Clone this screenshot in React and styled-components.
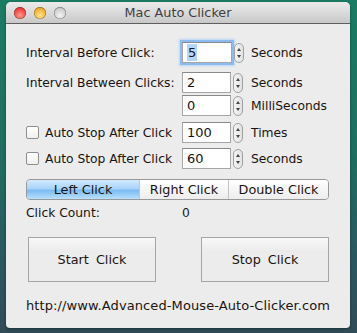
import React from 'react'
import styled, { createGlobalStyle } from 'styled-components'

const GlobalStyle = createGlobalStyle`
  html, body {
    margin: 0;
    padding: 0;
  }
  body {
    width: 357px;
    height: 333px;
    overflow: hidden;
    background: linear-gradient(to bottom, #1b7c64 0%, #1f6f60 45%, #2c5660 80%, #314c58 100%);
    font-family: "DejaVu Sans", "Liberation Sans", sans-serif;
  }
`

const Desktop = styled.div`
  padding: 2px 7px 0 6px;
`

const Window = styled.div`
  width: 344px;
  height: 326px;
  background: #ececec;
  border-radius: 5px 5px 4px 4px;
  overflow: hidden;
  box-shadow: 0 1px 3px rgba(0, 0, 0, 0.4);
  display: flex;
  flex-direction: column;
`

const TitleBar = styled.div`
  height: 21px;
  flex: none;
  display: flex;
  align-items: center;
  position: relative;
  background: linear-gradient(to bottom, #ebebeb 0%, #dadada 50%, #c8c8c8 100%);
  border-bottom: 1px solid #5e5e5e;
  padding-left: 8px;
  gap: 8px;
`

const Light = styled.span`
  width: 12px;
  height: 12px;
  border-radius: 50%;
  background: radial-gradient(circle at 50% 70%, ${(p) => p.$light} 0%, ${(p) => p.$color} 60%, ${(p) => p.$dark} 100%);
  box-shadow: inset 0 0 0 0.5px rgba(0, 0, 0, 0.45);
`

const Title = styled.div`
  position: absolute;
  left: 0;
  right: 0;
  text-align: center;
  font-size: 12.8px;
  color: #3f3f3f;
`

const Content = styled.div`
  padding: 18px 20px 0 20px;
  font-size: 12.3px;
  color: #1a1410;
  display: flex;
  flex-direction: column;
`

const Row = styled.div`
  display: grid;
  grid-template-columns: 156px 62px auto;
  align-items: center;
  height: 21px;
  margin-top: ${(p) => p.$gap || 0}px;
`

const LabelCell = styled.div`
  display: flex;
  align-items: center;
  gap: 6px;
  white-space: nowrap;
`

const Check = styled.span`
  width: 11px;
  height: 11px;
  border: 1px solid #8e8e8e;
  border-radius: 2px;
  background: linear-gradient(to bottom, #ffffff, #f0f0f0);
`

const FieldCell = styled.div`
  display: flex;
  align-items: center;
  gap: 2px;
`

const Field = styled.div`
  width: ${(p) => p.$w || 49}px;
  height: 21px;
  box-sizing: border-box;
  border: 1px solid #a6a6a6;
  border-top-color: #8a8a8a;
  background: #fff;
  padding: 0 4px;
  display: flex;
  align-items: center;
  font-size: 13px;
  box-shadow: ${(p) => (p.$focus ? '0 0 0 2px #8cbcef, 0 0 2px 3px #b7d5f5' : 'none')};
`

const Selected = styled.span`
  background: #b5d5fd;
  padding: 0 1px;
  line-height: 17px;
`

const Stepper = styled.div`
  width: 10px;
  height: 20px;
  box-sizing: border-box;
  border: 1px solid #a0a0a0;
  border-radius: 5px;
  background: linear-gradient(to right, #f4f4f4, #e2e2e2);
  display: flex;
  flex-direction: column;
  align-items: center;
  justify-content: space-between;
  padding: 4px 0;
`

const Arrow = styled.span`
  width: 0;
  height: 0;
  border-left: 2px solid transparent;
  border-right: 2px solid transparent;
  ${(p) => (p.$up ? 'border-bottom: 3px solid #444;' : 'border-top: 3px solid #444;')}
`

const Unit = styled.div`
  padding-left: 7px;
  white-space: nowrap;
`

const Segmented = styled.div`
  margin-top: 10px;
  display: grid;
  grid-template-columns: 112px 89px 1fr;
  height: 21px;
  box-sizing: border-box;
  border: 1px solid #989898;
  border-radius: 4px;
  overflow: hidden;
  width: 303px;
`

const Segment = styled.div`
  display: flex;
  align-items: center;
  justify-content: center;
  font-size: 12.8px;
  border-left: ${(p) => (p.$first ? 'none' : '1px solid #c4c4c4')};
  background: ${(p) =>
    p.$active
      ? 'linear-gradient(to bottom, #d2e9fd 0%, #a9d4fb 45%, #7cbbf3 55%, #b9e0fd 100%)'
      : 'linear-gradient(to bottom, #ffffff 0%, #f6f6f6 50%, #ededed 100%)'};
`

const CountRow = styled.div`
  margin-top: 2px;
  display: grid;
  grid-template-columns: 156px auto;
  height: 22px;
  align-items: center;
`

const Buttons = styled.div`
  margin-top: 13px;
  display: flex;
  justify-content: space-between;
  padding: 0 0 0 2px;
  width: 301px;
`

const BigButton = styled.div`
  width: 128px;
  height: 45px;
  box-sizing: border-box;
  border: 1px solid #a5a5a5;
  background: linear-gradient(to bottom, #f8f8f8 0%, #ececec 30%, #ececec 100%);
  display: flex;
  align-items: center;
  justify-content: center;
  font-size: 12.8px;
  word-spacing: 3px;
`

const Url = styled.div`
  margin-top: 16px;
  font-size: 13px;
  letter-spacing: 0.1px;
  white-space: nowrap;
`

const Spin = ({ value, w, focus }) => (
  <FieldCell>
    <Field $w={w} $focus={focus}>
      {focus ? <Selected>{value}</Selected> : value}
    </Field>
    <Stepper>
      <Arrow $up />
      <Arrow />
    </Stepper>
  </FieldCell>
)

const App = () => {
  return (
    <>
      <GlobalStyle />
      <Desktop>
        <Window>
          <TitleBar>
            <Light $color="#f2453f" $light="#ff9a8a" $dark="#b8201c" />
            <Light $color="#f2b233" $light="#ffe38a" $dark="#c07a10" />
            <Light $color="#cfcfcf" $light="#f4f4f4" $dark="#a5a5a5" />
            <Title>Mac Auto Clicker</Title>
          </TitleBar>
          <Content>
            <Row>
              <LabelCell>Interval Before Click:</LabelCell>
              <Spin value="5" w={51} focus />
              <Unit>Seconds</Unit>
            </Row>
            <Row $gap={9}>
              <LabelCell>Interval Between Clicks:</LabelCell>
              <Spin value="2" />
              <Unit>Seconds</Unit>
            </Row>
            <Row $gap={2}>
              <LabelCell />
              <Spin value="0" />
              <Unit>MilliSeconds</Unit>
            </Row>
            <Row $gap={6}>
              <LabelCell>
                <Check />
                Auto Stop After Click
              </LabelCell>
              <Spin value="100" />
              <Unit>Times</Unit>
            </Row>
            <Row $gap={5}>
              <LabelCell>
                <Check />
                Auto Stop After Click
              </LabelCell>
              <Spin value="60" />
              <Unit>Seconds</Unit>
            </Row>
            <Segmented>
              <Segment $first $active>Left Click</Segment>
              <Segment>Right Click</Segment>
              <Segment>Double Click</Segment>
            </Segmented>
            <CountRow>
              <div>Click Count:</div>
              <div>0</div>
            </CountRow>
            <Buttons>
              <BigButton>Start Click</BigButton>
              <BigButton>Stop Click</BigButton>
            </Buttons>
            <Url>http://www.Advanced-Mouse-Auto-Clicker.com</Url>
          </Content>
        </Window>
      </Desktop>
    </>
  )
}

export default App
